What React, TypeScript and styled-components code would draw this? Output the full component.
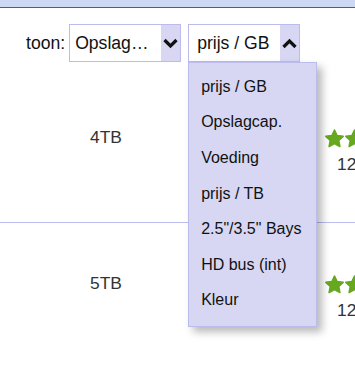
import React from "react";
import styled, { createGlobalStyle } from "styled-components";

const Global = createGlobalStyle`
  html, body { margin: 0; padding: 0; background: #fff; overflow: hidden; }
  body { font-family: "Liberation Sans", Arial, sans-serif; color: #111; }
`;

const TopBand = styled.div`
  height: 7px;
  background: #cdd9f4;
  border-bottom: 1px solid #1769d8;
`;

const Toolbar = styled.div`
  display: flex;
  align-items: center;
  padding: 16px 0 0 26px;
  font-size: 17.6px;
  height: 38px;
`;

const Label = styled.span`
  margin-right: 4px;
  color: #111;
`;

const SelectWrap = styled.div<{ $gap?: number }>`
  position: relative;
  margin-left: ${(p) => p.$gap ?? 0}px;
`;

const SelectBox = styled.div`
  display: flex;
  width: 112px;
  height: 38px;
  box-sizing: border-box;
  border: 1px solid #bcbcec;
  background: #fff;
`;

const SelectText = styled.div<{ $pad: number }>`
  flex: 1;
  min-width: 0;
  padding-left: ${(p) => p.$pad}px;
  display: flex;
  align-items: center;
  white-space: nowrap;
  overflow: hidden;
  color: #111;
`;

const ArrowBox = styled.div`
  width: 19px;
  background: #d7d7f3;
  display: flex;
  align-items: center;
  justify-content: center;
`;

const Menu = styled.ul`
  position: absolute;
  top: 100%;
  left: 0;
  width: 129px;
  box-sizing: border-box;
  margin: 0;
  padding: 6px 0 8px;
  list-style: none;
  background: #d7d7f3;
  border: 1px solid #bcbcec;
  box-shadow: 5px 5px 8px rgba(0, 0, 0, 0.28);
  font-size: 16px;
  z-index: 10;
`;

const MenuItem = styled.li`
  height: 35.6px;
  display: flex;
  align-items: center;
  padding-left: 12px;
  white-space: nowrap;
  color: #111;
`;

const Table = styled.div`
  margin-top: 15px;
`;

const Row = styled.div`
  display: grid;
  grid-template-columns: 212px 113px 30px;
  height: 145px;
  border-bottom: 1px solid #bdbdf0;
  overflow: hidden;
`;

const SizeCell = styled.div`
  padding-top: 50px;
  text-align: center;
  font-size: 17.4px;
  line-height: 20px;
  color: #333;
`;

const RatingCell = styled.div`
  grid-column: 3;
  padding-top: 52px;
  white-space: nowrap;
  overflow: hidden;
`;

const Stars = styled.div`
  display: flex;
  gap: 1px;
`;

const StarSvg = styled.svg`
  flex-shrink: 0;
  width: 19px;
  height: 19px;
`;

const ChevronSvg = styled.svg`
  flex-shrink: 0;
  width: 15px;
  height: 11px;
`;

const Count = styled.div`
  padding-left: 12px;
  margin-top: 6px;
  font-size: 17.4px;
  line-height: 20px;
  color: #333;
`;

const Chevron = ({ up }: { up?: boolean }) => (
  <ChevronSvg viewBox="0 0 15 11">
    <polyline
      points={up ? "1.5,9 7.5,3 13.5,9" : "1.5,2 7.5,8 13.5,2"}
      fill="none"
      stroke="#111"
      strokeWidth="3.2"
    />
  </ChevronSvg>
);

const starPoints = (() => {
  const pts: string[] = [];
  for (let i = 0; i < 10; i++) {
    const r = i % 2 === 0 ? 11.5 : 5.6;
    const a = -Math.PI / 2 + (i * Math.PI) / 5;
    pts.push(`${(12 + r * Math.cos(a)).toFixed(2)},${(12.8 + r * Math.sin(a)).toFixed(2)}`);
  }
  return pts.join(" ");
})();

const Star = () => (
  <StarSvg viewBox="0 0 24 24">
    <polygon
      points={starPoints}
      fill="#66a81f"
      stroke="#66a81f"
      strokeWidth="2"
      strokeLinejoin="round"
    />
  </StarSvg>
);

const options = [
  "prijs / GB",
  "Opslagcap.",
  "Voeding",
  "prijs / TB",
  '2.5"/3.5" Bays',
  "HD bus (int)",
  "Kleur",
];

const rows = ["4TB", "5TB"];

export default function App() {
  return (
    <>
      <Global />
      <TopBand />
      <Toolbar>
        <Label>toon:</Label>
        <SelectWrap>
          <SelectBox>
            <SelectText $pad={5}>Opslag…</SelectText>
            <ArrowBox>
              <Chevron />
            </ArrowBox>
          </SelectBox>
        </SelectWrap>
        <SelectWrap $gap={7}>
          <SelectBox>
            <SelectText $pad={8}>prijs / GB</SelectText>
            <ArrowBox>
              <Chevron up />
            </ArrowBox>
          </SelectBox>
          <Menu>
            {options.map((o) => (
              <MenuItem key={o}>{o}</MenuItem>
            ))}
          </Menu>
        </SelectWrap>
      </Toolbar>
      <Table>
        {rows.map((r) => (
          <Row key={r}>
            <SizeCell>{r}</SizeCell>
            <RatingCell>
              <Stars>
                {[0, 1, 2, 3, 4].map((i) => (
                  <Star key={i} />
                ))}
              </Stars>
              <Count>12</Count>
            </RatingCell>
          </Row>
        ))}
      </Table>
    </>
  );
}
